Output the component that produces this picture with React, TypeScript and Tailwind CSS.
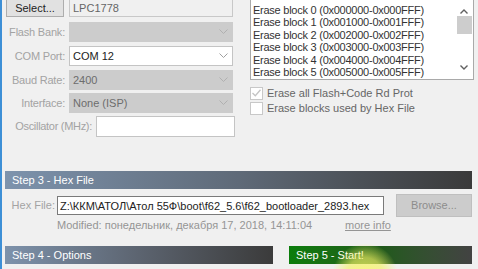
import type { ReactNode } from "react";

const font = { fontFamily: '"Liberation Sans", Arial, sans-serif' };

const Chevron = ({ color = "#a8a8a8" }: { color?: string }) => (
    <svg width="9" height="6" viewBox="0 0 9 6">
        <polyline points="0.5,0.5 4.5,4.5 8.5,0.5" fill="none" stroke={color} strokeWidth="1" />
    </svg>
);

const ComboRow = ({ label, value, enabled, className = "" }: { label: string; value?: string; enabled?: boolean; className?: string }) => (
    <div className={`flex items-center h-[20px] ${className}`}>
        <div className="w-[63px] text-right text-[#a3a3a3] whitespace-nowrap tracking-[-0.2px]">{label}</div>
        <div
            className={`ml-[4px] w-[164px] h-[20px] flex items-center justify-between pl-[3px] pr-[4px] border ${enabled
                ? "bg-white border-[#c4c4c4] text-[#222]"
                : "bg-[#cccccc] border-[#cccccc] text-[#6d6d6d]"
                }`}
        >
            <span>{value}</span>
            <Chevron color={enabled ? "#a0a0a0" : "#b0b0b0"} />
        </div>
    </div>
);

const StepBar = ({ title, className }: { title: string; className: string }) => (
    <div className={`h-[18px] flex items-center pl-[7px] text-white text-[11px] ${className}`}>{title}</div>
);

const Check = ({ checked, children }: { checked?: boolean; children: ReactNode }) => (
    <div className="flex items-center h-[14px]">
        <div className="w-[13px] h-[13px] border border-[#c8c8c8] bg-white flex items-center justify-center">
            {checked && (
                <svg width="9" height="8" viewBox="0 0 9 8">
                    <polyline points="0.5,4 3.3,6.8 8.5,0.8" fill="none" stroke="#c4c4c4" strokeWidth="1.3" />
                </svg>
            )}
        </div>
        <span className="ml-[4px] text-[#666]">{children}</span>
    </div>
);

const blocks = [0, 1, 2, 3, 4, 5];

export default function App() {
    return (
        <div
            className="relative w-[478px] h-[269px] overflow-hidden bg-[#f0f0f0] border-l-2 border-[#3d8fd6] text-[11px] leading-none"
            style={font}
        >
            {/* TOP */}
            <div className="flex -mt-[3px] h-[174px]">
                {/* device settings */}
                <div className="w-[238px]">
                    <div className="flex h-[20px]">
                        <button className="ml-[4px] w-[58px] h-[20px] bg-[#e1e1e1] border border-[#adadad] text-[#222] pt-[3px]">
                            Select...
                        </button>
                        <div className="ml-[5px] w-[164px] h-[20px] bg-[#f0f0f0] border border-[#c8c8c8] flex items-center pl-[3px] pt-[3px] text-[#666]">
                            LPC1778
                        </div>
                    </div>
                    <ComboRow label="Flash Bank:" className="mt-[5px]" />
                    <ComboRow label="COM Port:" value="COM 12" enabled className="mt-[4px]" />
                    <ComboRow label="Baud Rate:" value="2400" className="mt-[4px]" />
                    <ComboRow label="Interface:" value="None (ISP)" className="mt-[3px]" />
                    <div className="flex items-center h-[21px] mt-[3px]">
                        <div className="w-[90px] text-right text-[#a3a3a3] whitespace-nowrap tracking-[-0.3px]">Oscillator (MHz):</div>
                        <div className="ml-[4px] w-[139px] h-[21px] bg-white border border-[#c4c4c4]" />
                    </div>
                </div>

                {/* erase blocks */}
                <div className="flex-1 pl-[10px]">
                    <div className="flex w-[224px] h-[83px] bg-white border border-[#a9a9a9]">
                        <div className="flex-1 pl-[2px] pt-[6px] text-[#333] tracking-[-0.25px]">
                            {blocks.map((b) => (
                                <div key={b} className="h-[12.5px] flex items-center whitespace-nowrap">
                                    Erase block {b} (0x00{b}000-0x00{b}FFF)
                                </div>
                            ))}
                        </div>
                        <div className="w-[16px] mr-[1px] flex flex-col items-center">
                            <div className="h-[18px] flex items-end pb-[2px]">
                                <svg width="8" height="5" viewBox="0 0 8 5">
                                    <polyline points="0.5,4.5 4,1 7.5,4.5" fill="none" stroke="#606060" strokeWidth="1.4" />
                                </svg>
                            </div>
                            <div className="w-[15px] h-[18px] bg-[#cdcdcd]" />
                            <div className="flex-1" />
                            <div className="h-[14px]">
                                <svg width="8" height="5" viewBox="0 0 8 5">
                                    <polyline points="0.5,0.5 4,4 7.5,0.5" fill="none" stroke="#606060" strokeWidth="1.4" />
                                </svg>
                            </div>
                        </div>
                    </div>
                    <div className="mt-[6px] flex flex-col gap-[1px]">
                        <Check checked>Erase all Flash+Code Rd Prot</Check>
                        <Check>Erase blocks used by Hex File</Check>
                    </div>
                </div>
            </div>

            {/* STEP 3 */}
            <StepBar
                title="Step 3 - Hex File"
                className="ml-[3px] w-[467px] bg-gradient-to-r from-[#7d93ad] via-[#5f6a78] to-[#3a3a3a]"
            />
            <div className="flex items-center mt-[5px] h-[23px]">
                <div className="w-[53px] text-right text-[#a3a3a3]">Hex File:</div>
                <div className="ml-[2px] w-[327px] h-[19px] bg-white border border-[#7a7a7a] flex items-center pl-[2px] pt-[1px] text-[#222] whitespace-nowrap overflow-hidden">
                    Z:\ККМ\АТОЛ\Атол 55Ф\boot\f62_5.6\f62_bootloader_2893.hex
                </div>
                <div className="ml-[12px] w-[76px] h-[23px] bg-[#cccccc] border border-[#bfbfbf] flex items-center justify-center text-[#8c8c8c]">
                    Browse...
                </div>
            </div>
            <div className="flex h-[12px] mt-[3px] text-[#959595] whitespace-nowrap">
                <span className="ml-[55px] w-[288px]">Modified: понедельник, декабря 17, 2018, 14:11:04</span>
                <span className="underline">more info</span>
            </div>

            {/* STEP 4 / 5 */}
            <div className="flex mt-[14px] ml-[3px]">
                <StepBar
                    title="Step 4 - Options"
                    className="w-[268px] bg-gradient-to-r from-[#7d92ab] via-[#5c6470] to-[#3b3b3b]"
                />
                <StepBar
                    title="Step 5 - Start!"
                    className="ml-[16px] w-[183px] bg-gradient-to-r from-[#0b7d0b] via-[#1f5a1a] to-[#424242]"
                />
            </div>

            {/* cursor highlight */}
            <div className="absolute left-[330px] top-[244px] w-[66px] h-[64px] rounded-full bg-[radial-gradient(circle,rgba(250,248,100,0.8)_0%,rgba(245,242,100,0.65)_40%,rgba(240,240,120,0)_72%)]" />
        </div>
    );
}
